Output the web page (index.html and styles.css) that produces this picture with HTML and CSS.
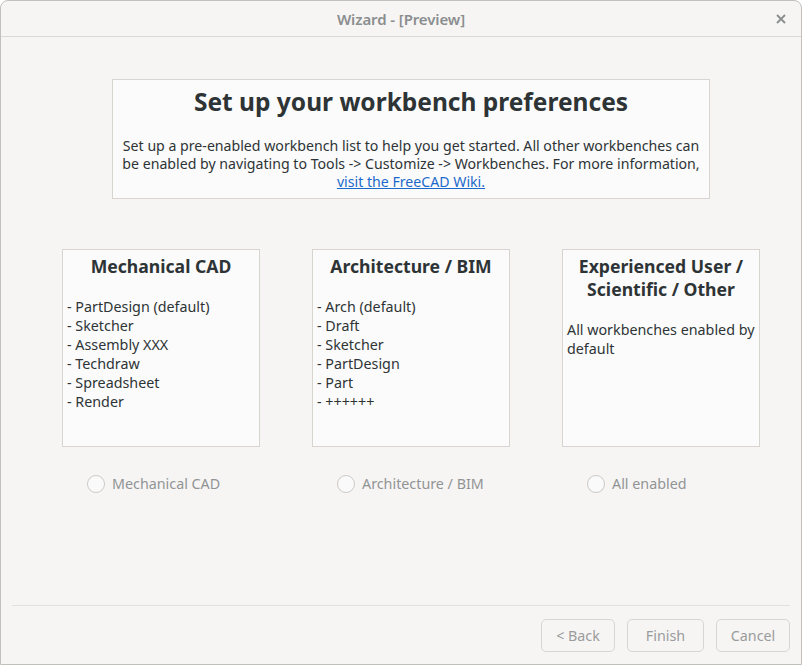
FILE: index.html
```html
<!DOCTYPE html>
<html>
<head>
<meta charset="utf-8">
<link rel="stylesheet" href="styles.css">
</head>
<body>
<div class="window">
  <div class="titlebar">
    <span class="title">Wizard - [Preview]</span>
    <span class="close">
      <svg width="10" height="10" viewBox="0 0 10 10"><path d="M1 1 L9 9 M9 1 L1 9" stroke="#8a8d8e" stroke-width="1.8" fill="none"/></svg>
    </span>
  </div>
  <div class="content">
    <div class="intro">
      <h1 class="heading">Set up your workbench preferences</h1>
      <p class="desc">Set up a pre-enabled workbench list to help you get started. All other workbenches can<br>be enabled by navigating to Tools -&gt; Customize -&gt; Workbenches. For more information,<br><a class="link" href="#">visit the FreeCAD Wiki.</a></p>
    </div>
    <div class="cards">
      <div class="col">
        <div class="card">
          <div class="card-title">Mechanical CAD</div>
          <div class="card-body">- PartDesign (default)<br>- Sketcher<br>- Assembly XXX<br>- Techdraw<br>- Spreadsheet<br>- Render</div>
        </div>
        <label class="radio"><span class="dot"></span>Mechanical CAD</label>
      </div>
      <div class="col">
        <div class="card">
          <div class="card-title">Architecture / BIM</div>
          <div class="card-body">- Arch (default)<br>- Draft<br>- Sketcher<br>- PartDesign<br>- Part<br>- ++++++</div>
        </div>
        <label class="radio"><span class="dot"></span>Architecture / BIM</label>
      </div>
      <div class="col">
        <div class="card">
          <div class="card-title">Experienced User / Scientific / Other</div>
          <div class="card-body small-gap">All workbenches enabled by default</div>
        </div>
        <label class="radio"><span class="dot"></span>All enabled</label>
      </div>
    </div>
  </div>
  <div class="footer">
    <div class="sep"></div>
    <div class="buttons">
      <button class="btn btn-back">&lt; Back</button>
      <button class="btn btn-finish">Finish</button>
      <button class="btn btn-cancel">Cancel</button>
    </div>
  </div>
</div>
</body>
</html>
```

FILE: styles.css
```css
html, body {
  margin: 0;
  padding: 0;
  background: #ffffff;
}
body {
  font-family: "Noto Sans", "DejaVu Sans", sans-serif;
  color: #2e3436;
}
.window {
  box-sizing: border-box;
  width: 802px;
  height: 665px;
  border: 1px solid #c3c0bc;
  border-radius: 8px 8px 0 0;
  background: #f6f5f4;
  display: flex;
  flex-direction: column;
  overflow: hidden;
}
.titlebar {
  height: 35px;
  border-bottom: 1px solid #dcd9d5;
  display: flex;
  align-items: center;
  justify-content: center;
  position: relative;
}
.title {
  font-size: 15px;
  font-weight: 600;
  color: #8b8e8f;
  letter-spacing: -0.1px;
}
.close {
  position: absolute;
  right: 15px;
  top: 13px;
  width: 10px;
  height: 10px;
  display: flex;
}
.content {
  flex: 1;
  padding: 42px 0 0 61px;
}
.intro {
  box-sizing: border-box;
  width: 598px;
  height: 120px;
  margin-left: 50px;
  border: 1px solid #d8d4d0;
  background: #fbfbfb;
  text-align: center;
  padding-top: 7px;
}
.heading {
  margin: 0;
  font-size: 24.5px;
  font-weight: 700;
  line-height: 30px;
  color: #2e3436;
}
.desc {
  margin: 20px 0 0;
  font-size: 14.15px;
  line-height: 18px;
  color: #2e3436;
  white-space: nowrap;
}
.link {
  color: #1b6acb;
  text-decoration: underline;
}
.cards {
  display: flex;
  gap: 52px;
  margin-top: 50px;
}
.col {
  display: flex;
  flex-direction: column;
  align-items: stretch;
}
.card {
  box-sizing: border-box;
  width: 198px;
  height: 198px;
  border: 1px solid #d8d4d0;
  background: #fbfbfb;
  padding: 5px 4px 0 4px;
}
.card-title {
  text-align: center;
  font-size: 17.6px;
  font-weight: 700;
  line-height: 23px;
  color: #2e3436;
}
.card-body {
  margin-top: 19px;
  font-size: 14.3px;
  line-height: 19px;
  color: #2e3436;
}
.card-body.small-gap {
  margin-top: 19px;
}
.radio {
  display: flex;
  align-items: center;
  gap: 7px;
  margin: 27px 0 0 25px;
  font-size: 14.3px;
  line-height: 20px;
  color: #919494;
}
.dot {
  box-sizing: border-box;
  width: 18px;
  height: 18px;
  border-radius: 50%;
  border: 1px solid #cdc9c5;
  background: #fafafa;
}
.footer {
  padding: 0 11px 12px 11px;
}
.sep {
  height: 1px;
  background: #e3e0dd;
}
.buttons {
  display: flex;
  justify-content: flex-end;
  gap: 12px;
  margin-top: 13px;
}
.btn {
  box-sizing: border-box;
  height: 33px;
  border: 1px solid #d9d5d1;
  border-radius: 5px;
  background: #f6f5f4;
  font-family: "Noto Sans", "DejaVu Sans", sans-serif;
  font-size: 14.3px;
  color: #9a9c9c;
  padding: 0;
}
.btn-back { width: 74px; }
.btn-finish { width: 77px; }
.btn-cancel { width: 74px; }
```
